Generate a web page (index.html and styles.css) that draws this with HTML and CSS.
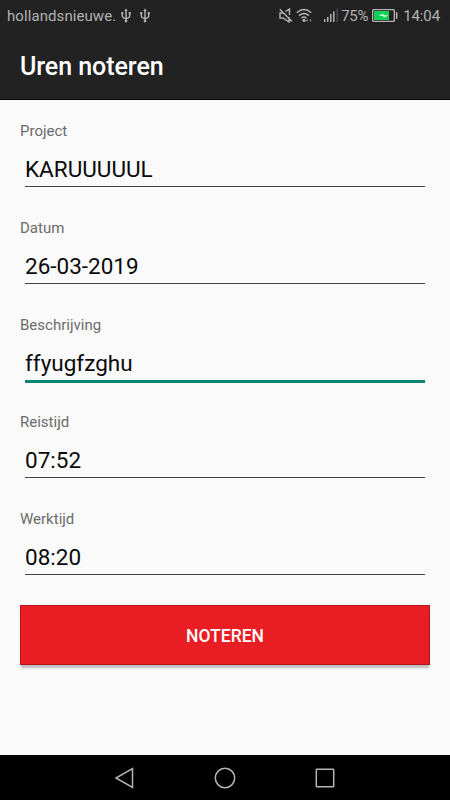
FILE: index.html
```html
<!DOCTYPE html>
<html lang="nl">
<head>
    <meta charset="UTF-8">
    <meta name="viewport" content="width=device-width, initial-scale=1.0">
    <title>Uren noteren</title>
    <link rel="stylesheet" href="styles.css">
</head>
<body>
    <header class="header">
        <div class="status-bar">
            <span class="carrier">hollandsnieuwe.</span>
            <svg class="usb" width="10" height="16" viewBox="0 0 10 16">
                <path d="M5 2v11M1.3 5v3q0 2 3.7 2.6Q8.700 10 8.700 8V5" />
                <path class="solid" d="M5 0.500L6.700 3H3.300zM0.300 4h2v2.200h-2zM7.700 4h2v2.200h-2z" />
                <circle class="solid" cx="5" cy="13" r="1.400" />
            </svg>
            <svg class="usb" width="10" height="16" viewBox="0 0 10 16">
                <path d="M5 2v11M1.3 5v3q0 2 3.7 2.6Q8.700 10 8.700 8V5" />
                <path class="solid" d="M5 0.500L6.700 3H3.300zM0.300 4h2v2.200h-2zM7.700 4h2v2.200h-2z" />
                <circle class="solid" cx="5" cy="13" r="1.400" />
            </svg>
            <div class="status-icons">
                <svg class="mute" width="14" height="15" viewBox="0 0 14 15">
                    <path d="M4.200 5H1v5h3l6 4V9M6.500 3.500L10.500 1v6M0.800 1.200L13 13.500" />
                </svg>
                <svg class="wifi" width="17" height="15" viewBox="0 0 17 15">
                    <path d="M0.800 4.800q7.200-6.500 14.400 0M3 7.600q5-4.300 10 0M5.300 10.200q2.700-2.200 5.200 0" />
                    <circle class="solid" cx="8" cy="12.300" r="1.600" />
                    <path class="solid" d="M11.500 10.500v3.500l-1.200-1.500zM14.200 10.500v3.500l1.200-1.500z" />
                </svg>
                <svg class="signal" width="15" height="15" viewBox="0 0 15 15">
                    <path class="solid" d="M0 11h1.500v3H0zM3 9h1.500v5H3zM6 6h1.500v8H6zM9 3.500h1.500V14H9z" />
                    <path class="faint" d="M12.500 0.500h1.500V14h-1.500z" />
                </svg>
                <span class="percent">75%</span>
                <svg class="battery" width="26" height="13" viewBox="0 0 26 13">
                    <rect x="0.600" y="0.600" width="21.800" height="11.800" rx="1.500" />
                    <path class="charge" d="M2 2h15v9H2z" />
                    <path class="bolt" d="M6.500 6.500l5-2v1.500l5 .5-5 2.200V7.200z" />
                    <path class="solid" d="M24 3.200h1.500v6.600H24z" />
                </svg>
                <span class="clock">14:04</span>
            </div>
        </div>
        <h1 class="title">Uren noteren</h1>
    </header>

    <form class="form">
        <div class="field">
            <label for="project">Project</label>
            <input type="text" id="project" value="KARUUUUUL">
        </div>
        <div class="field">
            <label for="datum">Datum</label>
            <input type="text" id="datum" value="26-03-2019">
        </div>
        <div class="field active">
            <label for="beschrijving">Beschrijving</label>
            <input type="text" id="beschrijving" value="ffyugfzghu" spellcheck="false">
        </div>
        <div class="field">
            <label for="reistijd">Reistijd</label>
            <input type="text" id="reistijd" value="07:52">
        </div>
        <div class="field">
            <label for="werktijd">Werktijd</label>
            <input type="text" id="werktijd" value="08:20">
        </div>
        <button type="button" class="submit">NOTEREN</button>
    </form>

    <nav class="nav-bar">
        <svg width="22" height="22" viewBox="0 0 22 22">
            <path d="M18.500 1.500v19L2 11z" />
        </svg>
        <svg width="22" height="22" viewBox="0 0 22 22">
            <circle cx="11" cy="11" r="9.700" />
        </svg>
        <svg width="22" height="22" viewBox="0 0 22 22">
            <rect x="2.300" y="2.300" width="17.400" height="17.400" rx="0.500" />
        </svg>
    </nav>
</body>
</html>
```

FILE: styles.css
```css
* {
    box-sizing: border-box;
}
body {
    margin: 0;
    height: 100vh;
    display: flex;
    flex-direction: column;
    font-family: Roboto, sans-serif;
    background: #fafafa;
}
svg {
    display: block;
    flex: none;
    fill: none;
}
.header {
    height: 100px;
    background: #222;
    border-bottom: 1px solid #080808;
    color: white;
}
.status-bar {
    height: 31px;
    display: flex;
    align-items: center;
    padding: 0 10px 0 7px;
    font-size: 15px;
    color: #b2b2b2;
}
.status-bar svg {
    stroke: #b2b2b2;
    stroke-width: 1.4;
}
.status-bar .solid {
    fill: #b2b2b2;
    stroke: none;
}
.status-bar .faint {
    fill: #4a4a4a;
    stroke: none;
}
.carrier {
    width: 109px;
    letter-spacing: 0.08px;
}
.usb {
    margin: 0 4px 0 5px;
}
.status-icons {
    display: flex;
    align-items: center;
    margin-left: auto;
}
.wifi {
    margin-left: 3px;
}
.signal {
    margin-left: 11px;
}
.percent {
    margin-left: 2px;
    letter-spacing: -0.3px;
}
.battery {
    margin-left: 4px;
}
.status-bar .charge {
    fill: #12cf58;
    stroke: none;
}
.status-bar .bolt {
    fill: #c9f5d8;
    stroke: none;
}
.clock {
    margin-left: 5px;
    letter-spacing: -0.1px;
}
.title {
    margin: 0;
    padding-left: 20px;
    font-size: 25px;
    font-weight: 500;
    line-height: 71px;
    letter-spacing: -0.05px;
}
.form {
    flex: 1;
    padding: 22px 20px 0;
}
.field {
    height: 97px;
}
.field label {
    display: block;
    font-size: 15px;
    line-height: 18px;
    color: #6b6b6b;
}
.field input {
    display: block;
    width: 400px;
    height: 34px;
    margin: 13px 5px 0;
    padding: 0 0 2px;
    border: none;
    border-bottom: 1px solid #444;
    outline: none;
    background: none;
    font-family: inherit;
    font-size: 22.5px;
    color: #0a0a0a;
}
.field.active input {
    height: 36px;
    border-bottom: 3px solid #0d8474;
}
.submit {
    display: block;
    width: 100%;
    height: 60px;
    margin-top: -2px;
    padding: 2px 0 0;
    border: 1px solid #b3151b;
    background: #e91d24;
    box-shadow: 0 4px 2px -1px rgba(0, 0, 0, 0.25);
    font-family: inherit;
    font-size: 17.5px;
    font-weight: 500;
    color: #fff;
}
.nav-bar {
    height: 45px;
    display: flex;
    justify-content: center;
    align-items: center;
    gap: 78px;
    background: #000;
}
.nav-bar svg {
    stroke: #b5b5b5;
    stroke-width: 1.5;
}
```
